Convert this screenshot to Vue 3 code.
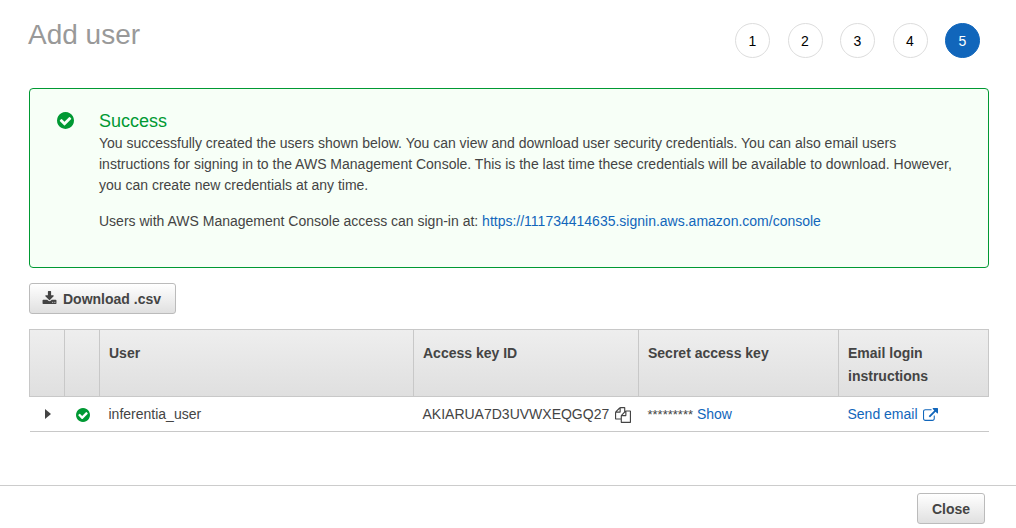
<script setup>
import { ref } from 'vue'

const steps = [1, 2, 3, 4, 5]
const current = 5
const users = [
  { name: 'inferentia_user', key: 'AKIARUA7D3UVWXEQGQ27', mask: '*********' }
]
const signIn = 'https://111734414635.signin.aws.amazon.com/console'
const checkPath = 'M1412 734q0-28-18-46l-91-90q-19-19-45-19t-45 19l-408 407-226-226q-19-19-45-19t-45 19l-91 90q-18 18-18 46 0 27 18 45l362 362q19 19 45 19 27 0 46-19l543-543q18-18 18-45zm252 162q0 209-103 385.5t-279.5 279.5-385.5 103-385.5-103-279.5-279.5-103-385.5 103-385.5 279.5-279.5 385.5-103 385.5 103 279.5 279.5 103 385.5z'
const expanded = ref(false)
</script>

<template>
  <div class="page">
    <header class="top">
      <h1>Add user</h1>
      <ol class="steps">
        <li v-for="s in steps" :key="s" :class="{ active: s === current }">{{ s }}</li>
      </ol>
    </header>

    <main>
      <section class="notice">
        <svg class="notice-icon" viewBox="128 128 1536 1536" aria-hidden="true"><path :d="checkPath" /></svg>
        <div class="notice-body">
          <h2>Success</h2>
          <p>You successfully created the users shown below. You can view and download user security credentials. You can also email users instructions for signing in to the AWS Management Console. This is the last time these credentials will be available to download. However, you can create new credentials at any time.</p>
          <p>Users with AWS Management Console access can sign-in at: <a href="#">{{ signIn }}</a></p>
        </div>
      </section>

      <button type="button" class="btn download">
        <svg viewBox="0 0 1792 1536" aria-hidden="true"><path d="M1344 1344q0-26-19-45t-45-19-45 19-19 45 19 45 45 19 45-19 19-45zm256 0q0-26-19-45t-45-19-45 19-19 45 19 45 45 19 45-19 19-45zm128-224v320q0 40-28 68t-68 28h-1472q-40 0-68-28t-28-68v-320q0-40 28-68t68-28h465l135 136q58 56 136 56t136-56l136-136h464q40 0 68 28t28 68zm-325-569q17 41-14 70l-448 448q-18 19-45 19t-45-19l-448-448q-31-29-14-70 17-39 59-39h256v-448q0-26 19-45t45-19h256q26 0 45 19t19 45v448h256q42 0 59 39z" /></svg>
        <span>Download .csv</span>
      </button>

      <table>
        <colgroup>
          <col class="c-icon"><col class="c-icon"><col><col class="c-key"><col class="c-secret"><col class="c-email">
        </colgroup>
        <thead>
          <tr>
            <th></th>
            <th></th>
            <th scope="col">User</th>
            <th scope="col">Access key ID</th>
            <th scope="col">Secret access key</th>
            <th scope="col">Email login instructions</th>
          </tr>
        </thead>
        <tbody>
          <tr v-for="u in users" :key="u.name">
            <td class="mid">
              <button type="button" class="bare" aria-label="Expand row" :aria-expanded="expanded" @click="expanded = !expanded">
                <svg class="caret" viewBox="0 0 6 10" aria-hidden="true"><path d="M0 0L6 5L0 10z" /></svg>
              </button>
            </td>
            <td class="mid"><svg class="row-check" viewBox="128 128 1536 1536" aria-hidden="true"><path :d="checkPath" /></svg></td>
            <td>{{ u.name }}</td>
            <td>
              <div class="key">
                <span>{{ u.key }}</span>
                <button type="button" class="bare" aria-label="Copy access key ID">
                  <svg class="copy" viewBox="0 0 1792 1792" aria-hidden="true"><path d="M1696 384q40 0 68 28t28 68v1216q0 40-28 68t-68 28h-960q-40 0-68-28t-28-68v-288h-544q-40 0-68-28t-28-68v-672q0-40 20-88t48-76l408-408q28-28 76-48t88-20h416q40 0 68 28t28 68v328q68-40 128-40h416zm-544 213l-299 299h299v-299zm-640-384l-299 299h299v-299zm196 647l316-316v-416h-384v416q0 40-28 68t-68 28h-416v640h512v-256q0-40 20-88t48-76zm956 804v-1152h-384v416q0 40-28 68t-68 28h-416v640h896z" /></svg>
                </button>
              </div>
            </td>
            <td><span class="mask">{{ u.mask }}</span> <a href="#">Show</a></td>
            <td>
              <a href="#" class="send">Send email
                <svg viewBox="0 0 1792 1536" aria-hidden="true"><path d="M1408 928v320q0 119-84.500 203.500t-203.500 84.500h-832q-119 0-203.500-84.500t-84.500-203.500v-832q0-119 84.500-203.500t203.500-84.500h704q14 0 23 9t9 23v64q0 14-9 23t-23 9h-704q-66 0-113 47t-47 113v832q0 66 47 113t113 47h832q66 0 113-47t47-113v-320q0-14 9-23t23-9h64q14 0 23 9t9 23zm384-864v512q0 26-19 45t-45 19-45-19l-176-176-652 652q-10 10-23 10t-23-10l-114-114q-10-10-10-23t10-23l652-652-176-176q-19-19-19-45t19-45 45-19h512q26 0 45 19t19 45z" /></svg>
              </a>
            </td>
          </tr>
        </tbody>
      </table>
    </main>

    <footer>
      <button type="button" class="btn">Close</button>
    </footer>
  </div>
</template>

<style>
body {
  margin: 0;
  background: #fff;
}
</style>

<style scoped>
.page {
  display: flex;
  flex-direction: column;
  box-sizing: border-box;
  min-height: 100vh;
  font-family: "Liberation Sans", Arial, sans-serif;
  font-size: 14px;
  line-height: 21px;
  color: #444;
}
.top {
  display: flex;
  justify-content: space-between;
  align-items: flex-start;
  padding: 18px 36px 0 28px;
}
h1 {
  margin: 0;
  font-size: 28px;
  line-height: 34px;
  font-weight: 400;
  color: #999;
}
.steps {
  display: flex;
  justify-content: space-between;
  width: 245px;
  margin: 0;
  padding: 5px 0 0;
  list-style: none;
}
.steps li {
  box-sizing: border-box;
  width: 35px;
  height: 35px;
  border: 1px solid #ddd;
  border-radius: 50%;
  line-height: 34px;
  text-align: center;
  color: #000;
}
.steps .active {
  border-color: #1166bb;
  background: #1166bb;
  color: #fff;
}
main {
  flex: 1;
  padding: 30px 27px 52px 29px;
}
.notice {
  display: flex;
  gap: 25px;
  padding: 21px 24px 35px 27px;
  border: 1px solid #093;
  border-radius: 4px;
  background: #f7fff7;
}
.notice-icon {
  flex: none;
  width: 17px;
  height: 17px;
  margin-top: 2px;
  fill: #093;
}
h2 {
  margin: 0;
  font-size: 18px;
  line-height: 23px;
  font-weight: 400;
  color: #093;
}
.notice p {
  margin: 0;
}
.notice p + p {
  margin-top: 15px;
}
a {
  color: #1166bb;
  text-decoration: none;
}
.btn {
  display: inline-flex;
  align-items: center;
  box-sizing: border-box;
  height: 31px;
  padding: 0 14px;
  border: 1px solid #bbb;
  border-radius: 3px;
  background: linear-gradient(#fff, #e0e0e0);
  font: bold 14px "Liberation Sans", Arial, sans-serif;
  color: #444;
}
main .download {
  display: flex;
  gap: 6px;
  margin: 15px 0;
  padding: 0 14px 0 12px;
}
.download svg {
  width: 15px;
  height: 13px;
  margin-bottom: 3px;
  fill: #444;
}
table {
  width: 100%;
  table-layout: fixed;
  border-collapse: collapse;
}
.c-icon {
  width: 35px;
}
.c-key {
  width: 225px;
}
.c-secret {
  width: 200px;
}
.c-email {
  width: 150px;
}
thead {
  background: linear-gradient(#eee, #dfdfdf);
}
th {
  padding: 12px 9px 8px;
  border: 1px solid #c8c8c8;
  line-height: 23px;
  text-align: left;
  vertical-align: top;
}
td {
  padding: 7px 9px 6px;
  border-bottom: 1px solid #c8c8c8;
}
.mid {
  padding: 0 0 0 1px;
  text-align: center;
}
.bare {
  display: inline-flex;
  padding: 0;
  border: 0;
  background: none;
}
.caret {
  width: 6px;
  height: 10px;
  fill: #444;
}
.row-check {
  display: block;
  width: 14px;
  height: 14px;
  margin: 2px auto 0;
  fill: #093;
}
.key {
  display: flex;
  align-items: center;
  gap: 6px;
}
.copy {
  width: 16px;
  height: 16px;
  fill: #444;
}
.mask {
  font-size: 13px;
}
.send {
  display: flex;
  align-items: center;
  gap: 5px;
}
.send svg {
  width: 15px;
  height: 13px;
  fill: #1166bb;
}
footer {
  display: flex;
  justify-content: flex-end;
  padding: 7px 31px 4px;
  border-top: 1px solid #ccc;
}
</style>
